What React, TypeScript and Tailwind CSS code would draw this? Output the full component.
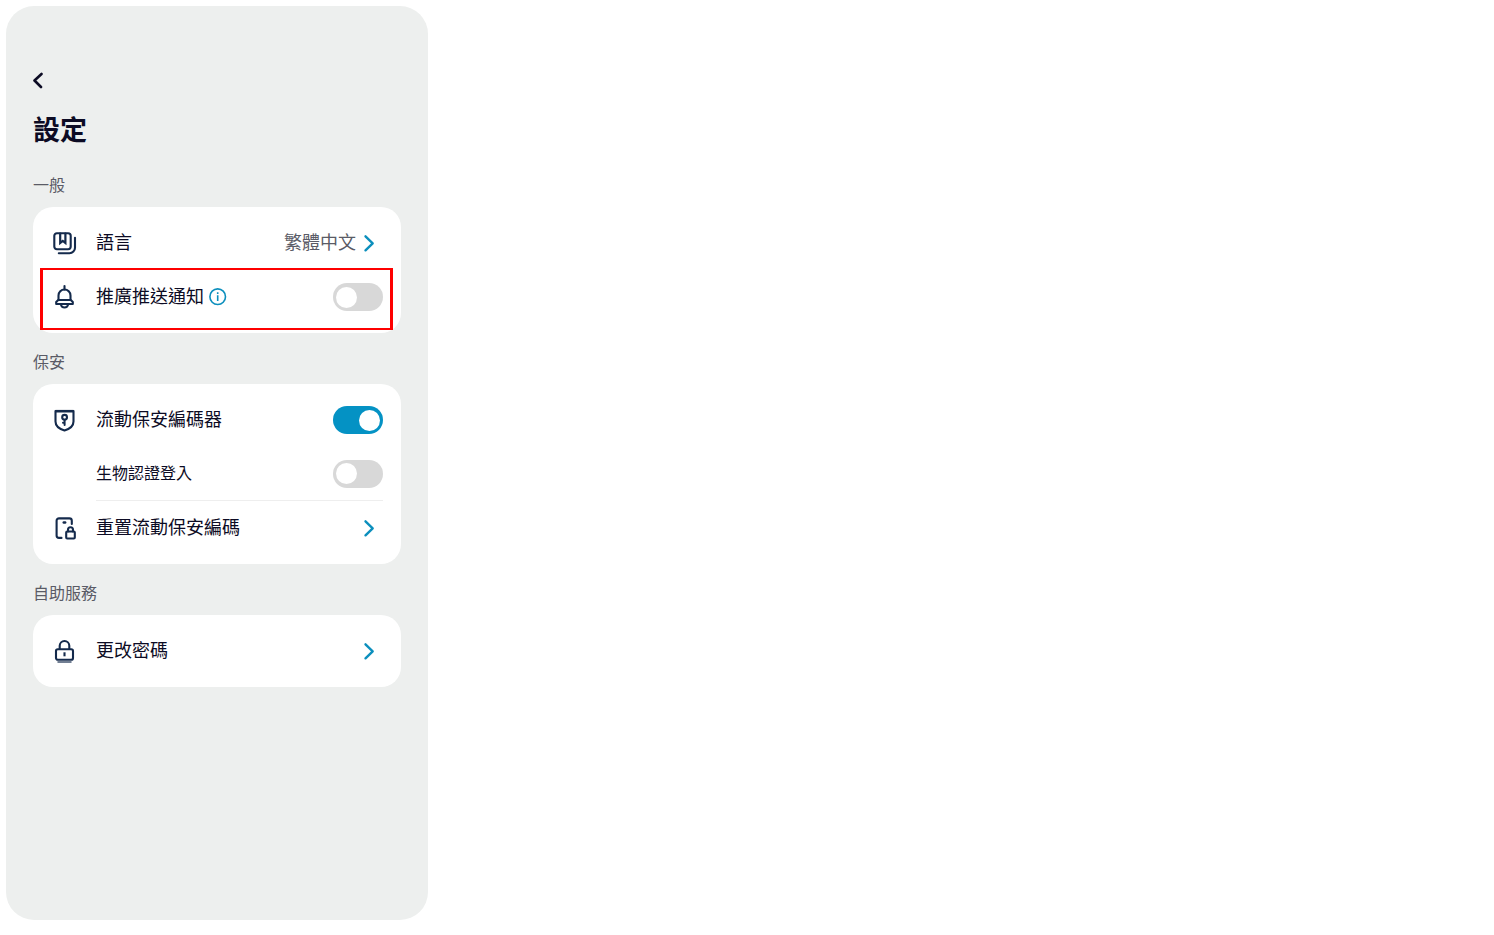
import React, { useState } from 'react';

interface IconProps {
  children: React.ReactNode;
}

const RowIcon = ({ children }: IconProps) => (
  <svg
    className="h-[26px] w-[26px] shrink-0 text-[#142a4c]"
    viewBox="0 0 26 26"
    fill="none"
    stroke="currentColor"
    strokeWidth="2.1"
    strokeLinecap="round"
    strokeLinejoin="round"
    aria-hidden="true"
  >
    {children}
  </svg>
);

const LanguageIcon = () => (
  <RowIcon>
    <rect x="3.3" y="3.2" width="16.4" height="16" rx="2.6" />
    <path d="M9.2 3.5V13l2.6-2 2.6 2V3.5" strokeWidth="2.2" strokeLinejoin="miter" />
    <path d="M24 7.8v9.9a5.5 5.5 0 0 1-5.5 5.5H7.8" />
  </RowIcon>
);

const BellIcon = () => (
  <RowIcon>
    <path d="M13.500 2v3.500" />
    <path d="M7.500 16v-4.500a6 6 0 0 1 12 0V16" />
    <path d="M7.200 16 5.200 18v2h16.600v-2l-2-2z" />
    <path d="M10 20.500a3.500 3 0 0 0 7 0" />
  </RowIcon>
);

const ShieldIcon = () => (
  <RowIcon>
    <path d="M4.500 4h18v10.500c0 4.500-4 7.500-9 9-5-1.500-9-4.500-9-9z" />
    <path d="M4.500 4.200h18" strokeWidth="2.600" strokeLinecap="butt" />
    <circle cx="13.600" cy="10.300" r="2.400" />
    <path d="M13.600 12.800v5.200M13.600 15.800h-1.600" strokeWidth="2" />
  </RowIcon>
);

const DeviceLockIcon = () => (
  <RowIcon>
    <path d="M10.500 22.900H8a2.400 2.400 0 0 1-2.400-2.400V5.800A2.400 2.400 0 0 1 8 3.400h10.400a2.400 2.400 0 0 1 2.400 2.400V9" />
    <path d="M12.800 7.500h1.300" strokeWidth="2.600" />
    <rect x="15.200" y="16.500" width="8.600" height="7" rx="1" />
    <path d="M17 16.500v-1.800a2.500 2.500 0 0 1 5 0v1.800" />
  </RowIcon>
);

const PadlockIcon = () => (
  <RowIcon>
    <rect x="5" y="11.200" width="17" height="10.600" rx="1.800" />
    <path d="M8.700 11V7.800a4.800 4.800 0 0 1 9.600 0V11" />
    <path d="M13.500 14.300v4" strokeLinecap="butt" />
    <path d="M7 24h13" strokeWidth="1.500" strokeOpacity="0.800" />
  </RowIcon>
);

const Chevron = () => (
  <svg className="mr-2 h-[18px] w-3 shrink-0 text-[#0c8fbd]" viewBox="0 0 12 18" fill="none" stroke="currentColor" strokeWidth="2.4" strokeLinecap="round" strokeLinejoin="round" aria-hidden="true">
    <path d="m2.500 2.300 7.200 7-7.200 7" />
  </svg>
);

interface SwitchProps {
  id: string;
  checked: boolean;
  onChange: (checked: boolean) => void;
}

const Switch = ({ id, checked, onChange }: SwitchProps) => (
  <input
    id={id}
    type="checkbox"
    role="switch"
    checked={checked}
    onChange={(e) => onChange(e.target.checked)}
    className="flex h-7 w-[50px] shrink-0 cursor-pointer appearance-none items-center rounded-full bg-[#d8d8d8] px-[3px] before:h-[21px] before:w-[21px] before:rounded-full before:bg-white checked:justify-end checked:bg-[#0492c4]"
  />
);

interface SectionProps {
  title: string;
  children: React.ReactNode;
}

const Section = ({ title, children }: SectionProps) => (
  <section className="mb-4">
    <h2 className="mb-[11px] text-base leading-6 text-[#5a5b66]">{title}</h2>
    <div className="rounded-[20px] bg-white py-[9px]">{children}</div>
  </section>
);

const App = () => {
  const [promotions, setPromotions] = useState(false);
  const [mobileKey, setMobileKey] = useState(true);
  const [biometric, setBiometric] = useState(false);

  return (
    <div className="flex min-h-screen flex-col bg-white px-1.5 pt-1.5 pb-[15px] font-['Noto_Sans_CJK_TC',sans-serif] text-[#0c0b24]">
      <main className="w-full max-w-[422px] flex-1 rounded-[28px] bg-[#edefee] px-[27px] pt-16">
        <button type="button" aria-label="返回" className="block h-5 w-5">
          <svg className="h-5 w-3" viewBox="0 0 12 20" fill="none" stroke="currentColor" strokeWidth="2.6" strokeLinecap="round" strokeLinejoin="round">
            <path d="M8.500 4 1.500 10.500l6.500 6.500" />
          </svg>
        </button>
        <h1 className="mt-[21px] mb-[25px] text-[27px] leading-9 font-bold">設定</h1>

        <Section title="一般">
          <button type="button" className="flex h-[54px] w-full items-center px-[18px] text-left text-lg">
            <LanguageIcon />
            <span className="ml-[19px] flex-1 pb-1">語言</span>
            <span className="mr-[7px] pb-1 text-[#5a5b66]">繁體中文</span>
            <Chevron />
          </button>
          <div className="relative flex h-[54px] items-center px-[18px] text-lg">
            <BellIcon />
            <label htmlFor="promotions" className="ml-[19px] pb-1">推廣推送通知</label>
            <button type="button" aria-label="詳情" className="ml-[5px] text-[#0c8fbd]">
              <svg className="h-[18px] w-[18px]" viewBox="0 0 18 18" fill="none" stroke="currentColor" strokeWidth="1.6">
                <circle cx="8.700" cy="8.700" r="7.800" />
                <path d="M8.700 7.300v5.700M8.700 4.300v1.700" />
              </svg>
            </button>
            <div className="ml-auto flex">
              <Switch id="promotions" checked={promotions} onChange={setPromotions} />
            </div>
            <div className="pointer-events-none absolute -top-0.5 right-2 -bottom-1.5 left-[7px] border-x-3 border-y-2 border-[#fe0000]" />
          </div>
        </Section>

        <Section title="保安">
          <div className="flex h-[54px] items-center px-[18px] text-lg">
            <ShieldIcon />
            <label htmlFor="mobile-key" className="ml-[19px] flex-1 pb-1">流動保安編碼器</label>
            <Switch id="mobile-key" checked={mobileKey} onChange={setMobileKey} />
          </div>
          <div className="mr-[18px] ml-[63px] flex h-[54px] items-center border-b border-[#eeeeee]">
            <label htmlFor="biometric" className="flex-1 pb-[3px]">生物認證登入</label>
            <Switch id="biometric" checked={biometric} onChange={setBiometric} />
          </div>
          <button type="button" className="flex h-[54px] w-full items-center px-[18px] text-left text-lg">
            <DeviceLockIcon />
            <span className="ml-[19px] flex-1 pb-1">重置流動保安編碼</span>
            <Chevron />
          </button>
        </Section>

        <Section title="自助服務">
          <button type="button" className="flex h-[54px] w-full items-center px-[18px] text-left text-lg">
            <PadlockIcon />
            <span className="ml-[19px] flex-1 pb-1">更改密碼</span>
            <Chevron />
          </button>
        </Section>
      </main>
    </div>
  );
};

export default App;
